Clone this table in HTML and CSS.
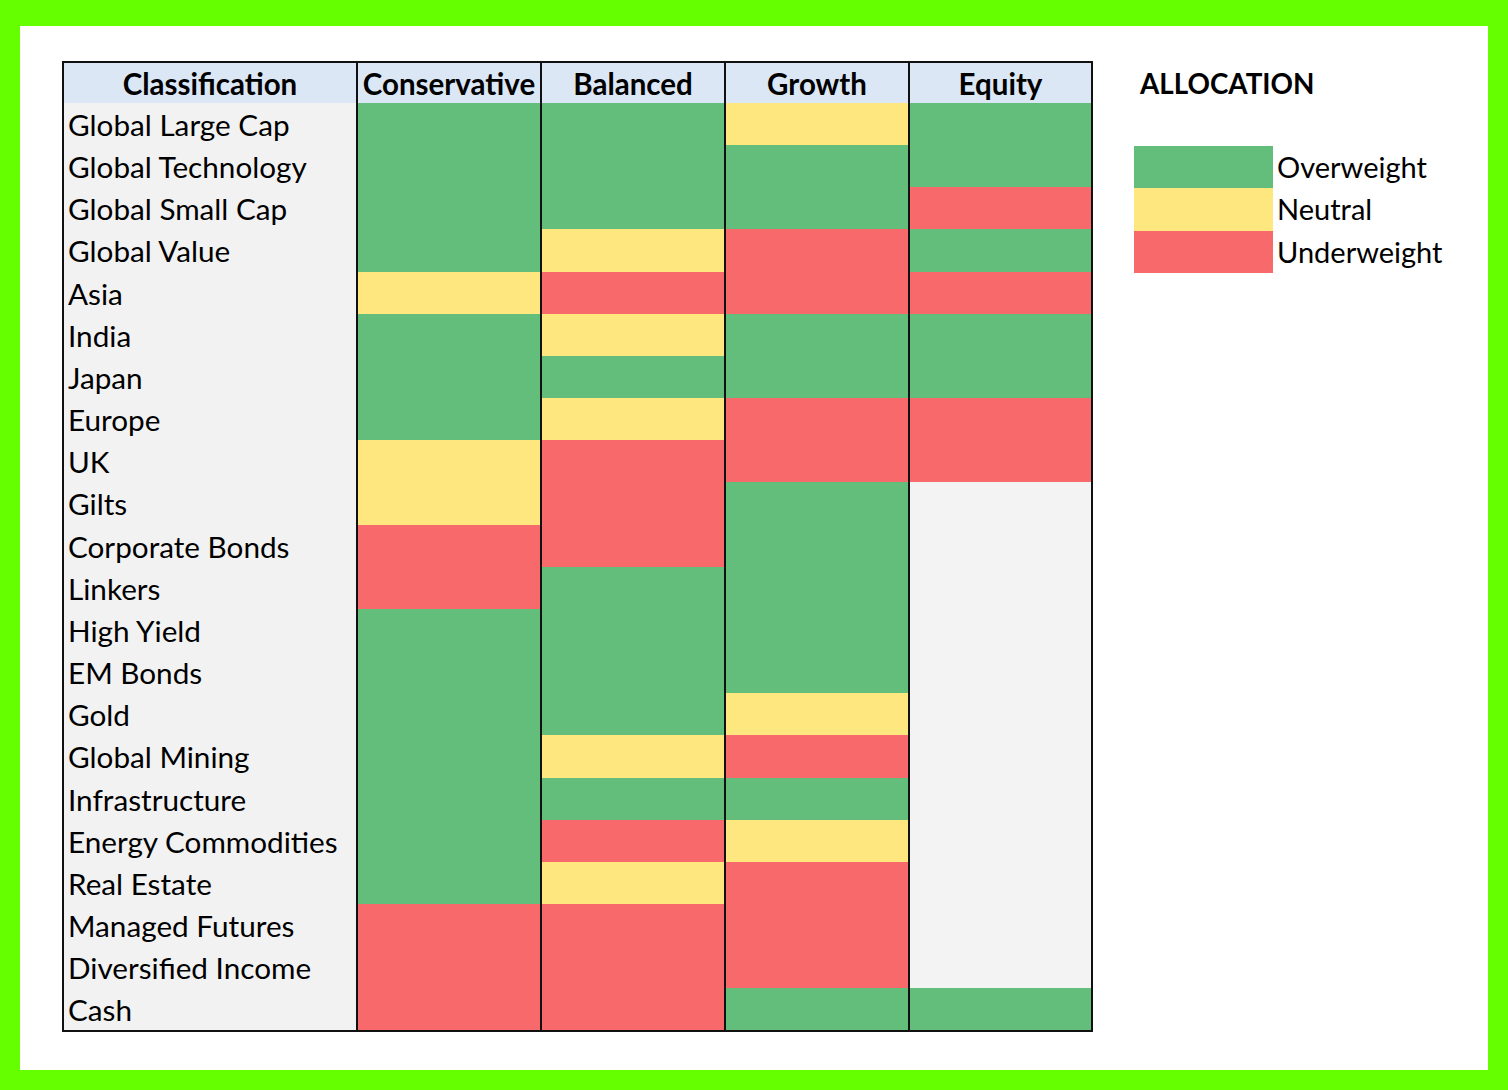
FILE: index.html
```html
<!DOCTYPE html>
<html lang="en">
<head>
<meta charset="utf-8">
<title>Allocation</title>
<link rel="stylesheet" href="styles.css">
</head>
<body>
<div class="frame">
  <div class="sheet">
    <div class="head">
      <div class="hc">Classification</div>
      <div class="hc sep">Conservative</div>
      <div class="hc sep">Balanced</div>
      <div class="hc sep">Growth</div>
      <div class="hc sep">Equity</div>
    </div>
    <div class="body">
      <div class="lbl">Global Large Cap</div>
      <div class="lbl">Global Technology</div>
      <div class="lbl">Global Small Cap</div>
      <div class="lbl">Global Value</div>
      <div class="lbl">Asia</div>
      <div class="lbl">India</div>
      <div class="lbl">Japan</div>
      <div class="lbl">Europe</div>
      <div class="lbl">UK</div>
      <div class="lbl">Gilts</div>
      <div class="lbl">Corporate Bonds</div>
      <div class="lbl">Linkers</div>
      <div class="lbl">High Yield</div>
      <div class="lbl">EM Bonds</div>
      <div class="lbl">Gold</div>
      <div class="lbl">Global Mining</div>
      <div class="lbl">Infrastructure</div>
      <div class="lbl">Energy Commodities</div>
      <div class="lbl">Real Estate</div>
      <div class="lbl">Managed Futures</div>
      <div class="lbl">Diversified Income</div>
      <div class="lbl">Cash</div>

      <!-- Conservative -->
      <div class="seg ow s4"></div>
      <div class="seg nt s1"></div>
      <div class="seg ow s3"></div>
      <div class="seg nt s2"></div>
      <div class="seg uw s2"></div>
      <div class="seg ow s7"></div>
      <div class="seg uw s3"></div>

      <!-- Balanced -->
      <div class="seg ow s3"></div>
      <div class="seg nt s1"></div>
      <div class="seg uw s1"></div>
      <div class="seg nt s1"></div>
      <div class="seg ow s1"></div>
      <div class="seg nt s1"></div>
      <div class="seg uw s3"></div>
      <div class="seg ow s4"></div>
      <div class="seg nt s1"></div>
      <div class="seg ow s1"></div>
      <div class="seg uw s1"></div>
      <div class="seg nt s1"></div>
      <div class="seg uw s3"></div>

      <!-- Growth -->
      <div class="seg nt s1"></div>
      <div class="seg ow s2"></div>
      <div class="seg uw s2"></div>
      <div class="seg ow s2"></div>
      <div class="seg uw s2"></div>
      <div class="seg ow s5"></div>
      <div class="seg nt s1"></div>
      <div class="seg uw s1"></div>
      <div class="seg ow s1"></div>
      <div class="seg nt s1"></div>
      <div class="seg uw s3"></div>
      <div class="seg ow s1"></div>

      <!-- Equity -->
      <div class="seg ow s2"></div>
      <div class="seg uw s1"></div>
      <div class="seg ow s1"></div>
      <div class="seg uw s1"></div>
      <div class="seg ow s2"></div>
      <div class="seg uw s2"></div>
      <div class="seg na s12"></div>
      <div class="seg ow s1"></div>
    </div>
  </div>

  <div class="legend">
    <div class="legend-title">ALLOCATION</div>
    <div class="legend-list">
      <div class="legend-item"><span class="sw ow"></span><span class="lt">Overweight</span></div>
      <div class="legend-item"><span class="sw nt"></span><span class="lt">Neutral</span></div>
      <div class="legend-item"><span class="sw uw"></span><span class="lt">Underweight</span></div>
    </div>
  </div>
</div>
</body>
</html>
```
FILE: styles.css
```css
html, body {
  margin: 0;
  padding: 0;
}
body {
  background: #66ff00;
  width: 1508px;
  height: 1090px;
  overflow: hidden;
  font-family: "Lato", "Open Sans", sans-serif;
  color: #000;
}
.frame {
  margin: 26px 20px 0 20px;
  width: 1468px;
  height: 1044px;
  box-sizing: border-box;
  background: #fff;
  padding: 35px 0 0 42px;
  display: flex;
  align-items: flex-start;
}
.sheet {
  width: 1031px;
  box-sizing: border-box;
  border: 2px solid #111;
}
.head {
  display: grid;
  grid-template-columns: 292px 184px 184px 184px 183px;
  height: 40px;
  background: #dce7f5;
}
.hc {
  font-weight: 700;
  font-size: 29.5px;
  text-align: center;
  line-height: 42px;
  box-sizing: border-box;
  white-space: nowrap;
}
.hc.sep {
  border-left: 2px solid #111;
}
.body {
  display: grid;
  grid-template-columns: 292px 184px 184px 184px 183px;
  grid-template-rows: repeat(22, 42.16px);
  grid-auto-flow: column;
}
.lbl {
  background: #f2f2f2;
  font-size: 29.7px;
  line-height: 44px;
  padding-left: 4px;
  white-space: nowrap;
  overflow: hidden;
}
.seg {
  border-left: 2px solid #111;
}
.s1 { grid-row: span 1; }
.s2 { grid-row: span 2; }
.s3 { grid-row: span 3; }
.s4 { grid-row: span 4; }
.s5 { grid-row: span 5; }
.s7 { grid-row: span 7; }
.s12 { grid-row: span 12; }
.ow { background: #63be7b; }
.nt { background: #ffe780; }
.uw { background: #f8696b; }
.na { background: #f3f3f3; }

.legend {
  margin-left: 41px;
  padding-top: 2px;
}
.legend-title {
  font-weight: 700;
  font-size: 27.8px;
  line-height: 42px;
  padding-left: 6px;
  height: 40px;
}
.legend-list {
  margin-top: 43px;
  display: flex;
  flex-direction: column;
}
.legend-item {
  display: flex;
  align-items: center;
  height: 42.3px;
}
.sw {
  width: 139px;
  height: 100%;
  display: block;
}
.lt {
  font-size: 29px;
  padding-left: 4px;
  line-height: 44px;
}
```
